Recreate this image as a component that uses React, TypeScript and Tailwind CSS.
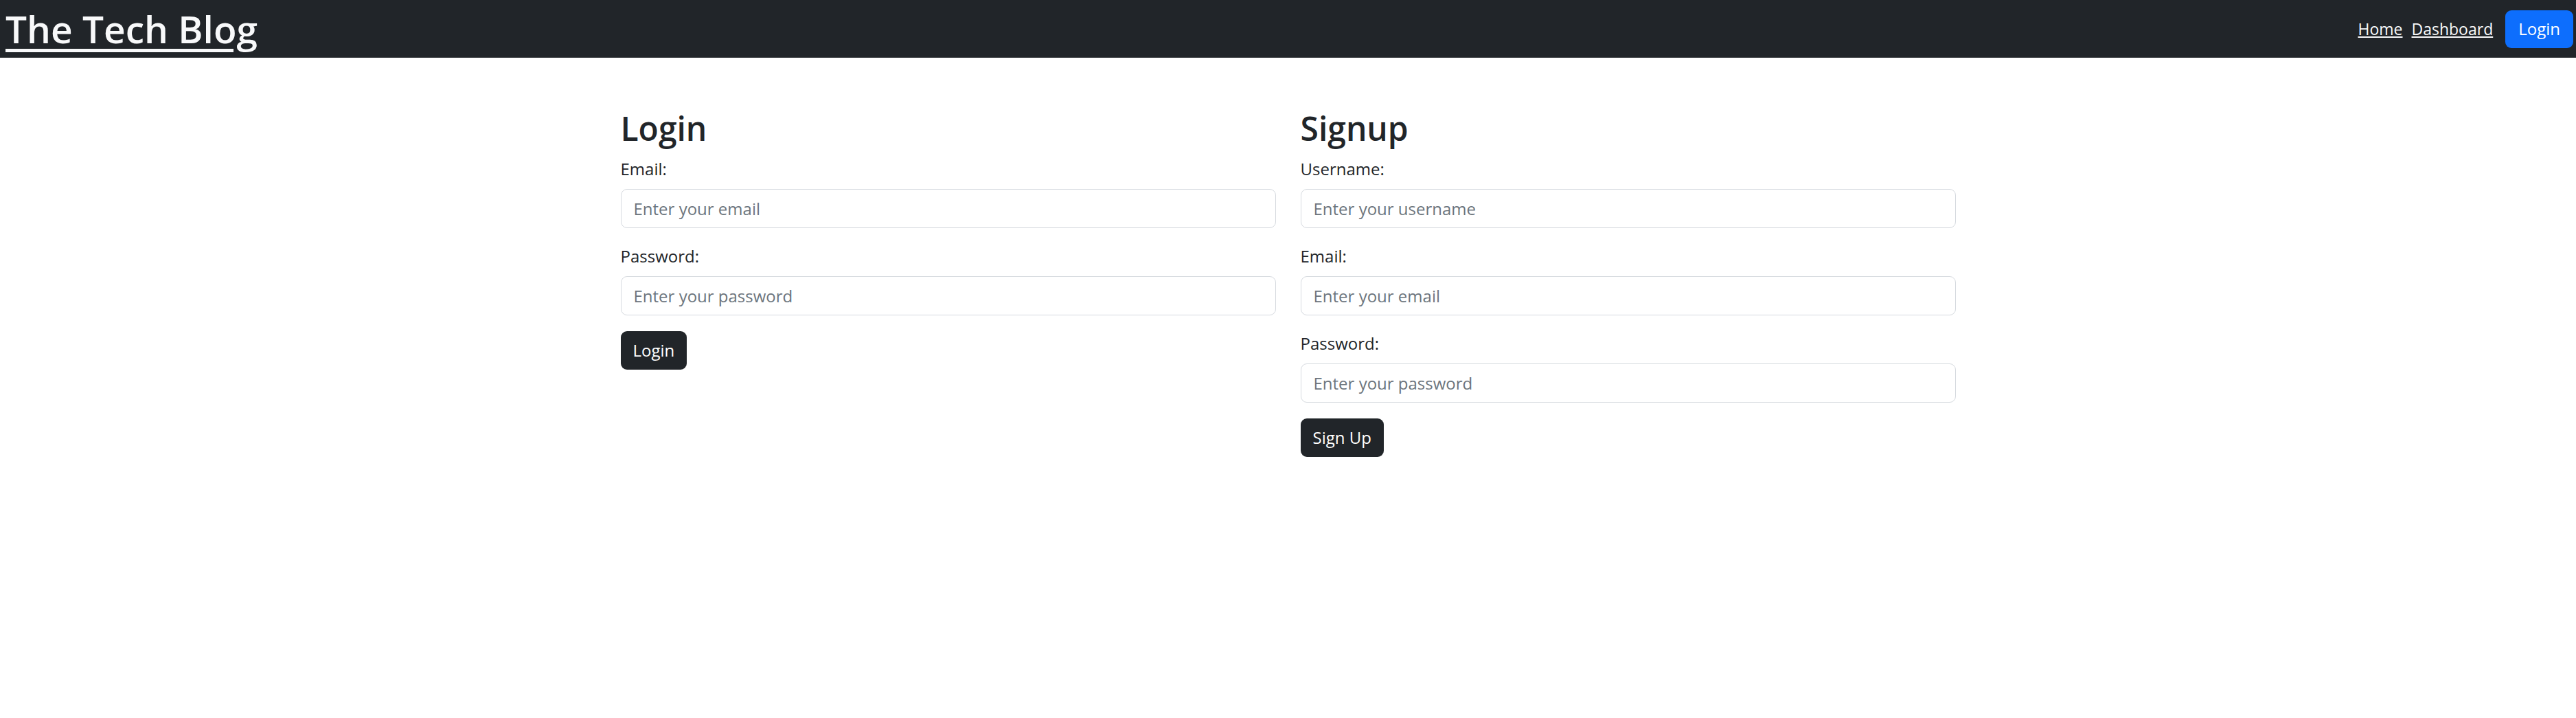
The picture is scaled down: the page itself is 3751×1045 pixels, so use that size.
import React from 'react';

const font = { fontFamily: '"Open Sans", "Noto Sans", sans-serif' };

interface FieldProps {
  label: string;
  type: string;
  placeholder: string;
}

const Field: React.FC<FieldProps> = ({ label, type, placeholder }) => (
  <div className="mb-[23px]">
    <label className="block mb-[11px] text-[24px] leading-[36px] text-[#212529]">{label}</label>
    <input
      type={type}
      placeholder={placeholder}
      className="block w-full h-[57px] px-[18px] text-[24px] border-[1.5px] border-[#d6dadf] rounded-[9px] bg-white text-[#212529] placeholder:text-[#6c757d] outline-none"
    />
  </div>
);

const DarkButton: React.FC<{ children: React.ReactNode }> = ({ children }) => (
  <button className="h-[56px] px-[18px] text-[24px] leading-[36px] bg-[#212529] text-white rounded-[9px]">
    {children}
  </button>
);

export default function App() {
  return (
    <div className="min-h-screen bg-white" style={font}>
      <nav className="h-[84px] bg-[#212529] flex items-center justify-between pl-2 pr-1">
        <a href="#" className="text-[55px] leading-[84px] font-semibold text-[#f8f9fa] underline decoration-[5px] underline-offset-[8px]">
          The Tech Blog
        </a>
        <div className="flex items-center">
          <a href="#" className="text-[23px] text-[#f8f9fa] underline mr-[13px]">Home</a>
          <a href="#" className="text-[23px] text-[#f8f9fa] underline mr-[18px]">Dashboard</a>
          <button className="h-[55px] px-[19px] text-[24px] bg-[#0d6efd] text-white rounded-[9px]">Login</button>
        </div>
      </nav>

      <div className="w-[1980px] mx-auto px-[18px] pt-[74px]">
        <div className="grid grid-cols-2 gap-[36px]">
          <div>
            <h2 className="text-[48px] leading-[57.6px] font-semibold text-[#212529] mb-3">Login</h2>
            <form>
              <Field label="Email:" type="email" placeholder="Enter your email" />
              <Field label="Password:" type="password" placeholder="Enter your password" />
              <DarkButton>Login</DarkButton>
            </form>
          </div>
          <div>
            <h2 className="text-[48px] leading-[57.6px] font-semibold text-[#212529] mb-3">Signup</h2>
            <form>
              <Field label="Username:" type="text" placeholder="Enter your username" />
              <Field label="Email:" type="email" placeholder="Enter your email" />
              <Field label="Password:" type="password" placeholder="Enter your password" />
              <DarkButton>Sign Up</DarkButton>
            </form>
          </div>
        </div>
      </div>
    </div>
  );
}
